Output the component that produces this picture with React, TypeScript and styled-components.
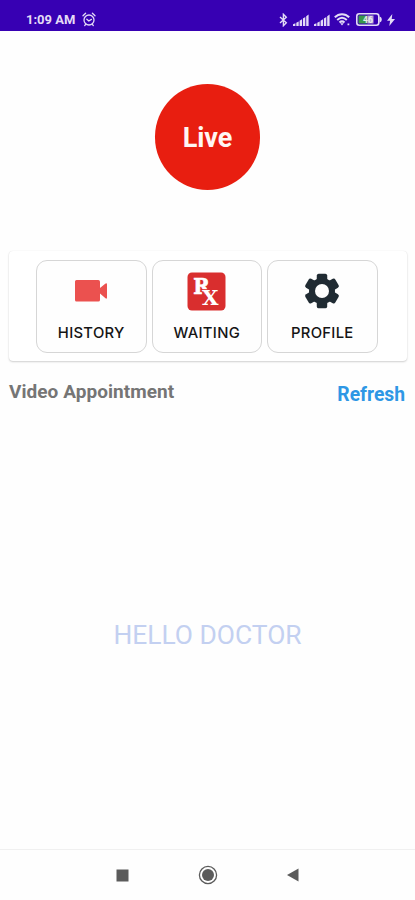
import React from "react";
import styled, { createGlobalStyle } from "styled-components";

const GlobalStyle = createGlobalStyle`
  * { box-sizing: border-box; }
  body { margin: 0; background: #fff; font-family: Roboto, "Liberation Sans", sans-serif; }
`;

const Screen = styled.div`
  display: flex;
  flex-direction: column;
  width: 415px;
  height: 900px;
  background: #fefefe;
  overflow: hidden;
`;

const StatusBar = styled.header`
  display: flex;
  align-items: center;
  justify-content: space-between;
  height: 31px;
  padding: 8px 20px 0 26px;
  background: #3700b3;
  color: #e4dbf6;
  flex: none;
`;

const StatusGroup = styled.div<{ $gap: number }>`
  display: flex;
  align-items: center;
  gap: ${(p) => p.$gap}px;
  svg { display: block; }
`;

const Clock = styled.span`
  font-size: 13px;
  line-height: 16px;
  font-weight: 700;
`;

const Hero = styled.div`
  display: flex;
  justify-content: center;
  padding-top: 53px;
  height: 220px;
`;

const LiveButton = styled.button`
  width: 105.5px;
  height: 105.5px;
  border: 0;
  padding: 2px 0 0;
  border-radius: 50%;
  background: #e81e10;
  color: #fff6f4;
  font: 700 27px/32px Roboto, sans-serif;
  letter-spacing: -0.1px;
`;

const ActionPanel = styled.nav`
  display: flex;
  gap: 5px;
  height: 110px;
  margin: 0 8px 0 9px;
  padding: 9px 0 0 27px;
  border-radius: 4px;
  background: #fff;
  box-shadow: 0 1px 2px rgba(0, 0, 0, 0.18), 0 0 1px rgba(0, 0, 0, 0.1);
`;

const ActionTile = styled.button`
  display: flex;
  flex-direction: column;
  align-items: center;
  width: 110.5px;
  height: 93px;
  padding: 9px 0 0;
  border: 1px solid #d6d6d6;
  border-radius: 11px;
  background: #fefefe;
`;

const IconSlot = styled.span`
  display: flex;
  align-items: center;
  justify-content: center;
  height: 42px;
  svg { display: block; }
`;

const TileLabel = styled.span`
  margin-top: 11px;
  font: 500 14.8px/20px Inter, sans-serif;
  letter-spacing: 0.3px;
  color: #151515;
`;

const SectionHeader = styled.div`
  display: flex;
  justify-content: space-between;
  padding: 19px 10px 0 9px;
`;

const SectionTitle = styled.h2`
  margin: 0;
  font-size: 19px;
  line-height: 24px;
  font-weight: 700;
  letter-spacing: 0.05px;
  color: #757575;
`;

const RefreshLink = styled.button`
  margin-top: 3px;
  padding: 0;
  border: 0;
  background: none;
  font: 700 19.3px/24px Roboto, sans-serif;
  color: #2e97e5;
`;

const EmptyState = styled.main`
  flex: 1;
  display: flex;
  align-items: center;
  justify-content: center;
  padding-top: 13px;
  font-size: 26.4px;
  line-height: 32px;
  color: #c3d0f1;
`;

const NavigationBar = styled.footer`
  display: grid;
  grid-template-columns: repeat(3, 85.5px);
  justify-content: center;
  align-items: center;
  justify-items: center;
  height: 51px;
  border-top: 1px solid #f0f0f0;
  color: #5b5b5b;
  flex: none;
  svg { display: block; }
`;

const AlarmIcon = () => (
  <svg width="14" height="15" viewBox="0 0 14 15" fill="none" stroke="currentColor" strokeWidth="1.3" strokeLinecap="round">
    <circle cx="7" cy="8" r="5" />
    <path d="M1 3.7 3.6 1.2M13 3.7 10.4 1.2M4.8 7.2 6.8 9 9.4 7.4M3.6 12.4l-.9 1.2M10.4 12.4l.9 1.2" />
  </svg>
);

const BluetoothIcon = () => (
  <svg width="9" height="14" viewBox="0 0 9 14" fill="none" stroke="currentColor" strokeWidth="1.4">
    <path d="M1 4 7.3 9.8 4.4 12.7V1.3L7.3 4.2 1 10" />
  </svg>
);

const SignalIcon = () => (
  <svg width="16" height="12" viewBox="0 0 16 12" fill="currentColor">
    <path d="M0 10.3 2.4 9.3V12H0zM3.3 8.8l2.4-1.3V12H3.3zM6.6 6.8 9 5.3V12H6.6zM9.9 4.4l2.4-1.5V12H9.9zM13.2 2.2 15.6.5V12h-2.4z" />
  </svg>
);

const WifiIcon = () => (
  <svg width="17" height="14" viewBox="0 0 17 14" fill="none" stroke="currentColor" strokeWidth="2">
    <path d="M.8 4.3C5 .2 11 .2 15.2 4.3M3.2 7c3-2.8 6.6-2.8 9.6 0M5.5 9.5c1.6-1.4 3.4-1.4 5 0" />
    <path d="m6.2 10.3 1.8 2.2 1.8-2.2zM13.5 10.5h1.8v1.8h-1.8z" fill="currentColor" stroke="none" />
  </svg>
);

const BatteryIcon = () => (
  <svg width="26" height="13" viewBox="0 0 26 13">
    <rect x=".8" y=".8" width="22" height="11.4" rx="2.5" fill="none" stroke="currentColor" strokeWidth="1.6" />
    <path d="M23.5 3.5c3 .5 3 5.5 0 6z" fill="currentColor" />
    <rect x="2.5" y="2.5" width="9" height="8" fill="#39974a" />
    <rect x="11.5" y="2.5" width="6" height="8" fill="#b9a5d8" />
    <text x="12" y="9.7" textAnchor="middle" fontFamily="Roboto, sans-serif" fontSize="8.5" fontWeight="700" fill="#e7eee8">46</text>
  </svg>
);

const BoltIcon = () => (
  <svg width="8" height="12" viewBox="0 0 8 12" fill="currentColor">
    <path d="M5.3 0 0 6.7h3.1L2.3 12 8 5H4.7z" />
  </svg>
);

const CameraIcon = () => (
  <svg width="32" height="22" viewBox="0 0 32 22" fill="#eb514f">
    <path d="M1.5 0H23.3Q25 0 25 1.7V8.1L30.2 3.7Q32 2.6 32 4.4V17.6Q32 19.4 30.2 18.1L25 13.5V20Q25 21.5 23.3 21.5H1.5Q0 21.5 0 20V1.5Q0 0 1.5 0Z" />
  </svg>
);

const PrescriptionIcon = () => (
  <svg width="39" height="39" viewBox="0 0 39 39" fontFamily="'DejaVu Serif', serif" fontWeight="700" fill="#fff">
    <rect x=".5" y=".5" width="38" height="38" rx="4.5" fill="#d92e2e" />
    <text x="6.3" y="22" fontSize="21.5" textLength="16.5" lengthAdjust="spacingAndGlyphs" stroke="#fff" strokeWidth=".7">R</text>
    <text x="15" y="33" fontSize="20" textLength="16.5" lengthAdjust="spacingAndGlyphs" stroke="#d92e2e" strokeWidth="1.4" paintOrder="stroke">X</text>
  </svg>
);

const GearIcon = () => (
  <svg width="36" height="36" viewBox="-18 -18 36 36" fill="#202b33">
    <defs>
      <path id="gear-tooth" d="M-5.5 0-5.2-15.4Q-5-17.3-3.4-17.3H3.4Q5-17.3 5.2-15.4L5.5 0Z" />
      <mask id="gear-hole">
        <rect x="-18" y="-18" width="36" height="36" fill="#fff" />
        <circle r="7" fill="#000" />
      </mask>
    </defs>
    <g mask="url(#gear-hole)">
      <circle r="13" />
      {[0, 60, 120, 180, 240, 300].map((angle) => (
        <use key={angle} href="#gear-tooth" transform={`rotate(${angle})`} />
      ))}
    </g>
  </svg>
);

const actions = [
  { label: "HISTORY", icon: <CameraIcon /> },
  { label: "WAITING", icon: <PrescriptionIcon /> },
  { label: "PROFILE", icon: <GearIcon /> },
];

export default function App() {
  return (
    <>
      <GlobalStyle />
      <Screen>
        <StatusBar>
          <StatusGroup $gap={6.5}>
            <Clock>1:09 AM</Clock>
            <AlarmIcon />
          </StatusGroup>
          <StatusGroup $gap={4.8}>
            <BluetoothIcon />
            <SignalIcon />
            <SignalIcon />
            <WifiIcon />
            <BatteryIcon />
            <BoltIcon />
          </StatusGroup>
        </StatusBar>
        <Hero>
          <LiveButton>Live</LiveButton>
        </Hero>
        <ActionPanel>
          {actions.map((a) => (
            <ActionTile key={a.label}>
              <IconSlot>{a.icon}</IconSlot>
              <TileLabel>{a.label}</TileLabel>
            </ActionTile>
          ))}
        </ActionPanel>
        <SectionHeader>
          <SectionTitle>Video Appointment</SectionTitle>
          <RefreshLink>Refresh</RefreshLink>
        </SectionHeader>
        <EmptyState>HELLO DOCTOR</EmptyState>
        <NavigationBar>
          <svg width="13" height="13" viewBox="0 0 13 13" fill="currentColor"><path d="M.5.5h12v12H.5z" /></svg>
          <svg width="20" height="20" viewBox="0 0 20 20" fill="currentColor">
            <circle cx="10" cy="10" r="8.6" fill="none" stroke="currentColor" strokeWidth="1.3" />
            <circle cx="10" cy="10" r="6" />
          </svg>
          <svg width="12" height="14" viewBox="0 0 12 14" fill="currentColor"><path d="M0 7 11.5.5v13z" /></svg>
        </NavigationBar>
      </Screen>
    </>
  );
}
